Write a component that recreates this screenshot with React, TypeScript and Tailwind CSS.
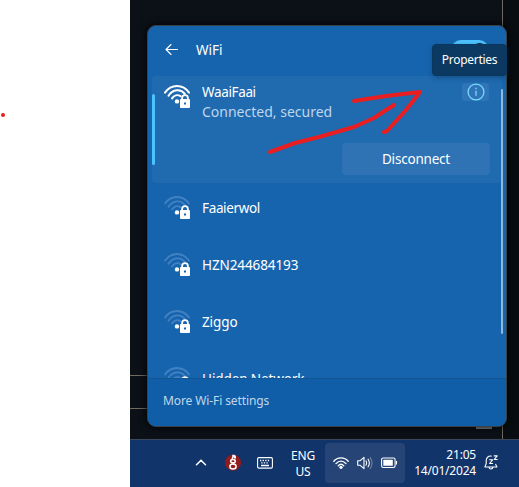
import React from "react";

function WifiLock({ dim = false }: { dim?: boolean }) {
  const arc = dim ? "#4382c2" : "#ffffff";
  return (
    <svg width="28" height="25" viewBox="0 0 28 25" fill="none" className="block shrink-0">
      <g stroke={arc} strokeWidth={dim ? 1.8 : 2} strokeLinecap="round">
        <path d="M2 8.6C8-.2 20-.2 26 8.6" />
        <path d="M5.5 11.7C9.8 5.2 17.6 4.6 21.8 9.8" />
        <path d="M9 14.4C11 11.2 14.6 10.4 17.6 12.2" />
      </g>
      <circle cx="14" cy="17.4" r="2.2" fill="#fff" />
      <path d="M19.1 15.6v-1.6a2.9 2.9 0 0 1 5.8 0v1.6" stroke="#fff" strokeWidth="1.8" />
      <path fillRule="evenodd" d="M17.9 15h8.2q.9 0 .9.9v7.2q0 .9-.9.9h-8.2q-.9 0-.9-.9v-7.2q0-.9.9-.9Zm3.1 3.4v2h2v-2Z" fill="#fff" />
    </svg>
  );
}

function Network({ name, tracking }: { name: string; tracking: string }) {
  return (
    <div className="flex h-[57px] shrink-0 items-start pl-[15px] pt-[12px]">
      <WifiLock dim />
      <span className={`ml-[11px] mt-[4px] text-[13.5px] leading-[18px] whitespace-nowrap text-white ${tracking}`}>{name}</span>
    </div>
  );
}

function Header() {
  return (
    <div className="flex h-[50px] shrink-0 items-center pl-[17px]">
      <svg width="14" height="13" viewBox="0 0 14 13" className="-mt-[3px]" fill="none" stroke="#fff" strokeWidth="1.1" strokeLinecap="round" strokeLinejoin="round">
        <path d="M12.5 6.5H1M6 1.5 1 6.5 6 11.5" />
      </svg>
      <span className="-mt-[2px] ml-[17px] w-[27px] text-[13.5px] text-white">WiFi</span>
      <div className="relative -mt-[2px] ml-[228px] h-[20px] w-[38px] rounded-full bg-[#4cc2ff]">
        <i className="absolute right-[3px] top-[3px] h-[13px] w-[13px] rounded-full bg-[#07192a]" />
      </div>
    </div>
  );
}

function Connected() {
  return (
    <div className="mx-1 flex h-[107px] shrink-0 rounded bg-[#206ab0]">
      <div className="mt-[18px] h-[71px] w-[3px] rounded-full bg-[#4cc2ff]" />
      <div className="flex grow flex-col">
        <div className="flex h-[66px] pl-2 pt-[8px]">
          <WifiLock />
          <div className="ml-[11px] flex flex-col whitespace-nowrap">
            <span className="text-[13.5px] leading-[17px] tracking-[-0.35px] text-white">WaaiFaai</span>
            <span className="mt-px text-[14px] leading-5 text-[#bfd6ec]">Connected, secured</span>
          </div>
          <div className="ml-auto mr-[13px] -mt-[1px] flex h-[18px] w-[27px] items-center justify-center rounded bg-[#3075b8]">
            <svg width="18" height="18" viewBox="0 0 18 18" fill="none" stroke="#78dcff" strokeWidth="1.3">
              <circle cx="9" cy="9" r="7.9" />
              <path d="M9 7.8v5M9 4.7v1.5" />
            </svg>
          </div>
        </div>
        <button className="mr-[12px] mt-[1px] h-8 w-[148px] self-end rounded bg-[#2f73b5] text-[13.5px] tracking-[-0.2px] text-white">Disconnect</button>
      </div>
    </div>
  );
}

function Flyout() {
  return (
    <div className="relative ml-[17px] mt-[25px] flex h-[402px] w-[360px] flex-col overflow-hidden rounded-[9px] border border-[#36434c] bg-[#1764ae] shadow-[0_0_8px_#000]">
      <Header />
      <div className="flex h-[302px] shrink-0 flex-col overflow-hidden">
        <Connected />
        <Network name="Faaierwol" tracking="tracking-[-0.35px]" />
        <Network name="HZN244684193" tracking="tracking-[-0.1px]" />
        <Network name="Ziggo" tracking="tracking-[-0.1px]" />
        <Network name="Hidden Network" tracking="tracking-[-0.1px]" />
      </div>
      <div className="flex grow items-center border-t border-[#135590] bg-[#105da8] pl-[15px] text-[12px] tracking-[-0.1px] text-[#c0d7eb]">
        <span className="-mt-[3px]">More Wi-Fi settings</span>
      </div>
      <div className="absolute left-[353px] top-[63px] h-[245px] w-[2px] rounded bg-[#91b9dc]" />
    </div>
  );
}

function Taskbar() {
  return (
    <div className="flex h-12 shrink-0 items-start border-t border-[#3a475c] bg-[#11356b] text-white">
      <svg className="ml-[65px] mt-[19px]" width="12" height="7" viewBox="0 0 12 7" fill="none" stroke="#fff" strokeWidth="1.5" strokeLinecap="round">
        <path d="m1.5 5.8 4.5-4.6 4.5 4.6" />
      </svg>
      <svg className="ml-[18px] mt-[14px]" width="16" height="17" viewBox="0 0 16 17">
        <circle cx="8" cy="8.7" r="8" fill="#931a1d" />
        <g fill="none" stroke="#fff" strokeWidth="1.5">
          <ellipse cx="8" cy="7.2" rx="2.3" ry="1.6" />
          <ellipse cx="8" cy="12.6" rx="3.1" ry="2.5" />
          <path d="M7 4.8 8 3V.8M9 .8v1.4h1.8M9 3.7h2M8.5 9v1.3" />
        </g>
      </svg>
      <svg className="ml-4 mt-[17px]" width="16" height="12" viewBox="0 0 16 12" fill="none" stroke="#fff" strokeWidth="1.1">
        <rect x=".6" y=".6" width="14.8" height="10.5" rx="1.3" />
        <path strokeWidth="1.3" d="M3 3.5h1.3m1.3 0h1.3m1.3 0h1.3m1.3 0h1.3M4.2 5.8h1.3m1.3 0h1.3m1.3 0h1.3M4 8.5h8" />
      </svg>
      <div className="ml-[18px] mt-2 w-[24px] text-center text-[12px] leading-4 tracking-[-0.2px]">ENG<br />US</div>
      <div className="ml-[10px] mt-[3px] flex h-10 w-20 items-center rounded bg-[#264476] pl-2">
        <svg width="16" height="12" viewBox="0 0 16 12" fill="none" stroke="#fff" strokeWidth="1.4" strokeLinecap="round">
          <path d="M.8 4.3C4.5-.3 11.5-.3 15.2 4.3M3 6.6C6 3.3 10 3.3 13 6.6M5.3 8.7C7 7 9 7 10.7 8.7" />
          <circle cx="8" cy="10.3" r="1.6" fill="#fff" stroke="none" />
        </svg>
        <svg className="ml-2" width="16" height="14" viewBox="0 0 16 14" fill="none" stroke="#fff" strokeWidth="1.1" strokeLinejoin="round" strokeLinecap="round">
          <path d="M.7 4.7h2.5L7 1.3v11.4L3.2 9.3H.7ZM9 4.8q1.4 2.2 0 4.4M11.1 3.2q2.5 3.8 0 7.6" />
          <path d="M13.2 1.6q3.7 5.4 0 10.8" stroke="#71849f" />
        </svg>
        <svg className="ml-2" width="17" height="12" viewBox="0 0 17 12" fill="none" stroke="#fff" strokeWidth="1.1">
          <rect x=".6" y="1" width="13.5" height="9.5" rx="1.7" />
          <rect x="2.3" y="2.7" width="9.5" height="6" rx=".5" fill="#fff" stroke="none" />
          <path d="M15.5 4v3.5" />
        </svg>
      </div>
      <div className="ml-[9px] mt-[7px] w-[62px] text-right text-[12px] leading-4 whitespace-nowrap tracking-[-0.2px]">21:05<br />14/01/2024</div>
      <svg className="ml-2 mt-[15px]" width="15" height="16" viewBox="0 0 15 16" fill="none" stroke="#fff" strokeWidth="1.1" strokeLinecap="round" strokeLinejoin="round">
        <path d="M7.2 1.1C4.2.8 2.2 3 2.2 5.6v3L.9 12h12l-1.2-2.6M5 12.2c.3 2.4 3.5 2.4 4 0" />
        <path d="M5.6 4.8h3L5.6 8.5h3M10.2.9h3l-3 3.6h3" />
      </svg>
    </div>
  );
}

export default function App() {
  return (
    <div className="relative flex h-[487px] w-[519px] overflow-hidden bg-white font-['Noto_Sans','Open_Sans',sans-serif]">
      <div className="w-[130px] shrink-0" />
      <div className="flex w-[389px] flex-col">
        <div className="relative h-[439px] shrink-0 overflow-hidden bg-[#0c1118]">
          <div className="absolute left-0 top-[375px] h-[34px] w-[372px] border-y border-[#706b61]" />
          <div className="absolute left-[372px] top-0 h-full w-[17px] border-l border-[#706b61] bg-[#080d11]" />
          <div className="absolute left-[346px] top-[420px] h-[9px] w-4 bg-[#85888c]" />
          <Flyout />
        </div>
        <Taskbar />
      </div>
      <div className="absolute left-[432px] top-[44px] flex h-[32px] w-[75px] items-center justify-center rounded border border-[#09375d] bg-[#0b3962] text-[12px] tracking-[-0.3px] text-white shadow-[0_2px_5px_#0b396280]">
        Properties
      </div>
      <svg className="absolute inset-0" width="519" height="487" fill="none" stroke="#e81e20" strokeWidth="4" strokeLinecap="round" strokeLinejoin="round">
        <path d="M270 152 284 147 295 143 319 137 354 127 374 118 386 110 394 105" />
        <path d="M354 101 386 96 420 92 406 110 387 131 384 132" />
        <circle cx="3" cy="115" r="2" fill="#e81e20" stroke="none" />
      </svg>
    </div>
  );
}
